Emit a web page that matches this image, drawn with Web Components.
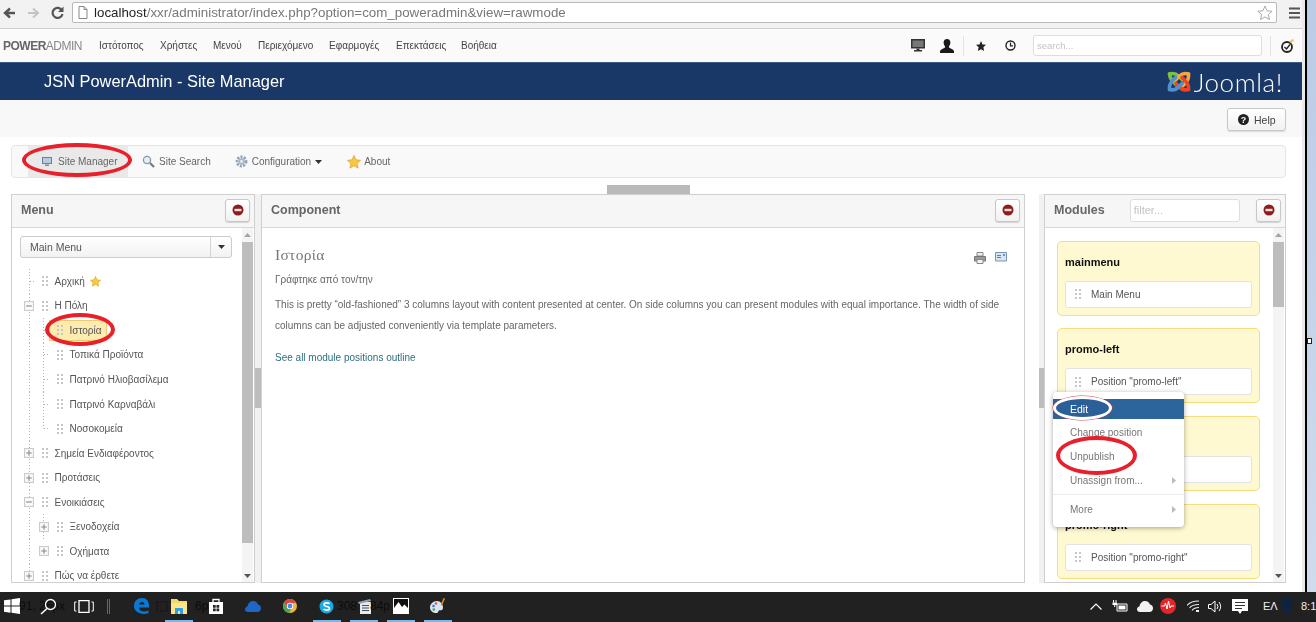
<!DOCTYPE html>
<html>
<head>
<meta charset="utf-8">
<title>JSN PowerAdmin</title>
<style>
    html, body { margin: 0; height: 100%; overflow: hidden; background: #fff; }
    body { font-family: "Liberation Sans", Arial, sans-serif; }
</style>
</head>
<body>
<pa-app>
    <pa-browser-bar>localhost</pa-browser-bar>
    <pa-top-nav></pa-top-nav>
    <pa-title-bar>JSN PowerAdmin - Site Manager</pa-title-bar>
    <pa-help-row></pa-help-row>
    <pa-tab-bar></pa-tab-bar>
    <pa-handle></pa-handle>
    <pa-columns>
        <pa-panel style="width:244px" heading="Menu" thumb-height="301">
            <pa-menu-select>Main Menu</pa-menu-select>
            <pa-tree>
                <pa-tree-row guides="29" star>Αρχική</pa-tree-row>
                <pa-tree-row guides="29" toggle="minus">Η Πόλη</pa-tree-row>
                <pa-tree-row guides="29,43" depth="1" selected>Ιστορία</pa-tree-row>
                <pa-tree-row guides="29,43" depth="1">Τοπικά Προϊόντα</pa-tree-row>
                <pa-tree-row guides="29,43" depth="1">Πατρινό Ηλιοβασίλεμα</pa-tree-row>
                <pa-tree-row guides="29,43" depth="1">Πατρινό Καρναβάλι</pa-tree-row>
                <pa-tree-row guides="29" depth="1" last>Νοσοκομεία</pa-tree-row>
                <pa-tree-row guides="29" toggle="plus">Σημεία Ενδιαφέροντος</pa-tree-row>
                <pa-tree-row guides="29" toggle="plus">Προτάσεις</pa-tree-row>
                <pa-tree-row guides="29" toggle="minus">Ενοικιάσεις</pa-tree-row>
                <pa-tree-row guides="29,43" depth="1" toggle="plus">Ξενοδοχεία</pa-tree-row>
                <pa-tree-row guides="29" depth="1" toggle="plus">Οχήματα</pa-tree-row>
                <pa-tree-row guides="29" toggle="plus">Πώς να έρθετε</pa-tree-row>
            </pa-tree>
        </pa-panel>
        <pa-splitter></pa-splitter>
        <pa-panel style="width:764px" heading="Component" no-scroll>
            <pa-article></pa-article>
        </pa-panel>
        <pa-splitter wide></pa-splitter>
        <pa-panel style="width:242px" heading="Modules" filter thumb-height="65">
            <pa-position name="mainmenu">Main Menu</pa-position>
            <pa-position name="promo-left">Position "promo-left"</pa-position>
            <pa-position name="&#160;"></pa-position>
            <pa-position name="promo-right">Position "promo-right"</pa-position>
        </pa-panel>
    </pa-columns>

    <pa-context-menu></pa-context-menu>
    <pa-ring style="left:22px;top:143px;width:110px;height:34px"></pa-ring>
    <pa-ring style="left:45px;top:313px;width:70px;height:33px"></pa-ring>
    <pa-ring style="left:1056px;top:436px;width:81px;height:39px"></pa-ring>
</pa-app>

<script>
    // all the little drawings live here so rows and bars can share them
    const ICONS = {
        back: '<svg width="13" height="12" viewBox="0 0 13 12"><path d="M12 6H3M7 1.500 2 6l5 4.500" fill="none" stroke="#555" stroke-width="2.400"/></svg>',
        forward: '<svg width="13" height="12" viewBox="0 0 13 12"><path d="M1 6h9M6 1.500 11 6l-5 4.500" fill="none" stroke="#c4c4c4" stroke-width="2"/></svg>',
        reload: '<svg width="13" height="13" viewBox="0 0 13 13"><path d="M11 4.500A5 5 0 1 0 11.500 8" fill="none" stroke="#555" stroke-width="2.200"/><path d="M12.500 .5v5.500H7z" fill="#555"/></svg>',
        page: '<svg width="10" height="13" viewBox="0 0 10 13"><path d="M1 .5h5l3 3v9H1z" fill="#fff" stroke="#888"/><path d="M6 .5v3h3" fill="none" stroke="#888"/></svg>',
        starOutline: '<svg width="16" height="16" viewBox="0 0 16 16"><path d="M8 1l2.100 4.800 5 .5-3.800 3.300 1.200 5L8 11.900l-4.500 2.700 1.200-5L.9 6.300l5-.5z" fill="#fff" stroke="#aaa"/></svg>',
        burger: '<svg width="11" height="12" viewBox="0 0 11 12"><path d="M0 1.500h11M0 6h11M0 10.500h11" stroke="#555" stroke-width="2.200"/></svg>',
        monitor: '<svg width="14" height="13" viewBox="0 0 14 13"><path d="M0 0h14v9.500H0z" fill="#333"/><path d="M1.500 1.500h11v6.500h-11z" fill="#777"/><path d="M5.500 9.500h3V11H11v1.500H3V11h2.500z" fill="#333"/></svg>',
        person: '<svg width="14" height="14" viewBox="0 0 14 14"><path d="M7 0c2.200 0 3.400 1.600 3.400 3.600 0 1.500-.6 2.800-1.400 3.600v1.300l4 2.300c.6.400 1 1 1 1.700V14H0v-1.500c0-.7.400-1.300 1-1.700l4-2.300V7.200C4.200 6.400 3.600 5.100 3.600 3.600 3.600 1.600 4.800 0 7 0z" fill="#1a1a1a"/></svg>',
        starSolid: '<svg width="10" height="10" viewBox="0 0 16 16"><path d="M8 0l2.400 5.400 5.600.6-4.200 3.800L13 16l-5-3-5 3 1.200-6.200L0 6l5.600-.6z" fill="#222"/></svg>',
        clock: '<svg width="11" height="11" viewBox="0 0 11 11"><circle cx="5.500" cy="5.500" r="4.500" fill="none" stroke="#222" stroke-width="1.400"/><path d="M5.500 2.500v3.300h2.500" fill="none" stroke="#222" stroke-width="1.200"/></svg>',
        compass: '<svg width="13" height="14" viewBox="0 0 13 14"><circle cx="6" cy="8" r="5" fill="none" stroke="#222" stroke-width="1.800"/><path d="M3.500 8l2 2L9 5.500" fill="none" stroke="#222" stroke-width="1.400"/><path d="M10 1l1 1-1.500 2-1-1z" fill="#e9b44c"/><circle cx="11.500" cy="1.500" r="1.300" fill="#f0c659"/></svg>',
        tabMonitor: '<svg width="10" height="10" viewBox="0 0 10 10"><path d="M0 0h10v7H0z" fill="#6d7f9a"/><path d="M1 1h8v5H1z" fill="#b9cbe2"/><path d="M3 7.500h4V9H3z" fill="#8a8a8a"/></svg>',
        tabSearch: '<svg width="13" height="13" viewBox="0 0 13 13"><circle cx="5" cy="5" r="3.600" fill="#e7eef5" stroke="#8d98a3" stroke-width="1.300"/><path d="M8 8l4 4" stroke="#777" stroke-width="2.200"/></svg>',
        tabGear: '<svg width="13" height="13" viewBox="0 0 13 13"><circle cx="6.500" cy="6.500" r="4.400" fill="none" stroke="#8fa2b5" stroke-width="3" stroke-dasharray="2 1.200"/><circle cx="6.500" cy="6.500" r="3.200" fill="#a9b8c6"/><circle cx="6.500" cy="6.500" r="1.400" fill="#e7edf2"/></svg>',
        tabStar: '<svg width="14" height="14" viewBox="0 0 16 16"><path d="M8 .5l2.300 5 5.200.6-3.900 3.600 1.100 5.300L8 12.300 3.300 15l1.100-5.300L.5 6.100l5.200-.6z" fill="#f7c843" stroke="#dca22c" stroke-width=".8"/></svg>',
        treeStar: '<svg width="11" height="11" viewBox="0 0 16 16"><path d="M8 .5l2.300 5 5.200.6-3.900 3.600 1.100 5.300L8 12.300 3.300 15l1.100-5.300L.5 6.100l5.200-.6z" fill="#f7c843" stroke="#dca22c" stroke-width=".8"/></svg>',
        grip: '<svg width="6" height="10" viewBox="0 0 6 10"><path d="M0 0h2v2H0zM4 0h2v2H4zM0 4h2v2H0zM4 4h2v2H4zM0 8h2v2H0zM4 8h2v2H4z" fill="#c6c6c6"/></svg>',
        print: '<svg width="12" height="12" viewBox="0 0 12 12"><path d="M3 .5h6V4H3z" fill="#eee" stroke="#888"/><path d="M.5 4.500h11v4.500H.5z" fill="#999" stroke="#777"/><path d="M3 7.500h6v4H3z" fill="#f4f4f4" stroke="#888"/></svg>',
        mail: '<svg width="12" height="10" viewBox="0 0 12 10"><path d="M.5.500h11v8.500H.5z" fill="#d7e4f2" stroke="#7a95b3"/><path d="M2 3h4v1H2zM2 5h4v1H2z" fill="#5e7fa3"/><path d="M8 2h2v2H8z" fill="#6b93c2"/></svg>',
        joomla: '<svg width="26" height="25" viewBox="0 0 26 25"><g fill="none" stroke-width="3.600" stroke-linecap="round"><path d="M3.500 5Q4 10 8 13.500L12.500 18" stroke="#7ac143"/><path d="M3.500 5Q9 3.500 12.500 7L16 10.500" stroke="#7ac143"/><path d="M22.500 5Q17 3.500 13.500 7L9 11.500" stroke="#f9a541"/><path d="M22.500 5Q23 11 19 14.500L16.500 17" stroke="#f9a541"/><path d="M22.500 20.500Q17 22 13.500 18L10 14.500" stroke="#f44321"/><path d="M22.500 20.500Q23 15 18.500 11L16 8.500" stroke="#f44321"/><path d="M3.500 20.500Q9 22 12.500 18L16.500 14" stroke="#5091cd"/><path d="M3.500 20.500Q3 15 7 11L9.500 8.500" stroke="#5091cd"/></g></svg>',
        stop: '<svg width="12" height="12" viewBox="0 0 12 12"><circle cx="6" cy="6" r="5.500" fill="#8e1c1c"/><path d="M2.500 4.800h7v2.400h-7z" fill="#f1dede"/></svg>',
        caretDown: '<svg width="7" height="4" viewBox="0 0 7 4"><path d="M0 0h7L3.500 4z" fill="#333"/></svg>',
        arrowUp: '<svg width="7" height="4" viewBox="0 0 7 4"><path d="M0 4h7L3.500 0z" fill="#a5a5a5"/></svg>',
        arrowDown: '<svg width="7" height="4" viewBox="0 0 7 4"><path d="M0 0h7L3.500 4z" fill="#555"/></svg>',
        arrowRight: '<svg width="4" height="7" viewBox="0 0 4 7"><path d="M0 0v7l4-3.500z" fill="#bbb"/></svg>',
        win: '<svg width="16" height="16" viewBox="0 0 16 16"><path d="M0 2.300 6.500 1.400v6.200H0zM7.500 1.200 16 0v7.600H7.500zM0 8.600h6.500v6.100L0 13.800zM7.500 8.600H16V16l-8.500-1.200z" fill="#fff"/></svg>',
        search: '<svg width="17" height="17" viewBox="0 0 17 17"><circle cx="10.500" cy="6.500" r="5" fill="none" stroke="#fff" stroke-width="1.300"/><path d="M7 10.500 1 16" stroke="#fff" stroke-width="1.600"/></svg>',
        taskView: '<svg width="20" height="13" viewBox="0 0 20 13"><path d="M5 .7h10v11.600H5z" fill="none" stroke="#fff" stroke-width="1.300"/><path d="M2.500 2H.7v9h1.800M17.500 2h1.800v9h-1.800" fill="none" stroke="#fff"/></svg>',
        sep: '<svg width="3" height="15" viewBox="0 0 3 15"><path d="M.5 0v15M2.500 0v15" stroke="#666"/></svg>',
        edge: '<svg width="15" height="16" viewBox="0 0 15 16"><path d="M15 9.500H5c0 3.500 4.500 5.500 9.500 3v2.500C8 17.500 0 14.500 0 8 0 3 3.500 0 8 0c4.500 0 7 3.500 7 7.500zM5 6.500h5.500C10.500 3 5.500 3 5 6.500z" fill="#0a78d6"/></svg>',
        cropGhost: '<svg width="12" height="11" viewBox="0 0 12 11"><path d="M1 1h10v9H1z" fill="none" stroke="#111" stroke-dasharray="2 1"/></svg>',
        folder: '<svg width="16" height="15" viewBox="0 0 16 15"><path d="M0 0h6l2 2h8v13H0z" fill="#f6d769"/><path d="M0 4h16v11H0z" fill="#fbe48b"/><path d="M4 9h8v6H4z" fill="#32a0e0"/><path d="M7 12h2v3H7z" fill="#fbe48b"/></svg>',
        store: '<svg width="14" height="16" viewBox="0 0 14 16"><path d="M0 4h14v12H0z" fill="#fff"/><path d="M4 4V1.500h6V4" fill="none" stroke="#fff" stroke-width="1.300"/><path d="M4 7h2.700v2.700H4zM7.500 7h2.700v2.700H7.500zM4 10.500h2.700v2.700H4zM7.500 10.500h2.700v2.700H7.500z" fill="#222"/></svg>',
        onedrive: '<svg width="16" height="11" viewBox="0 0 16 11"><path d="M3 11C1 11 0 9.500 0 8.200c0-1.500 1-2.700 2.500-2.800C3 2 5.500 0 8 0c2.300 0 4 1.200 5 3.400 2 .3 3 2 3 3.800 0 2-1.400 3.800-3.600 3.800z" fill="#2067c5"/></svg>',
        chrome: '<svg width="14" height="14" viewBox="0 0 14 14"><circle cx="7" cy="7" r="7" fill="#e9b93a"/><path d="M7 0a7 7 0 0 0-6 3.500L4 8.500 7 4h6A7 7 0 0 0 7 0z" fill="#d9483b"/><path d="M1 3.500A7 7 0 0 0 6 14l3-5-5-.5z" fill="#4aa45a"/><circle cx="7" cy="7" r="3.200" fill="#fff"/><circle cx="7" cy="7" r="2.400" fill="#4a8af0"/></svg>',
        skype: '<svg width="15" height="15" viewBox="0 0 15 15"><circle cx="7.500" cy="7.500" r="7" fill="#19a9e6"/><path d="M10.500 4.800C9 3.300 5 3.600 5 5.700c0 2.300 5.500 1.300 5.500 3.700 0 2-4 2.200-6 .7" fill="none" stroke="#fff" stroke-width="1.600"/></svg>',
        doc: '<svg width="14" height="15" viewBox="0 0 14 15"><path d="M2 3h11v12H2z" fill="#e6e9ee"/><path d="M0 3 12 0l1 2L1 5z" fill="#8ea0b3"/><path d="M4 6h7v1H4zM4 8.500h7v1H4zM4 11h7v1H4z" fill="#47515c"/></svg>',
        photo: '<svg width="16" height="16" viewBox="0 0 16 16"><path d="M0 0h16v16H0z" fill="#fff"/><path d="M1 1h14v9L11.500 6.500 9 9 5.500 4 1 10z" fill="#111"/></svg>',
        paint: '<svg width="16" height="16" viewBox="0 0 16 16"><path d="M7 3C3 3 0 6 0 9.500S3 15 6.500 15c2 0 1.500-2 2.500-2.500 1.500-.5 4 .5 4-3C13 6 10.500 3 7 3z" fill="#d8e4ef"/><circle cx="3.500" cy="8" r="1.300" fill="#3a7bd5"/><circle cx="6" cy="5.500" r="1.300" fill="#e2574c"/><circle cx="3.800" cy="11.500" r="1.300" fill="#47a447"/><path d="M13.500 0l1.500.5-3 7-1.300-.5z" fill="#e58a2e"/></svg>',
        chevron: '<svg width="12" height="7" viewBox="0 0 12 7"><path d="M.5 6.500 6 1l5.500 5.500" fill="none" stroke="#fff" stroke-width="1.200"/></svg>',
        battery: '<svg width="16" height="12" viewBox="0 0 16 12"><path d="M1.500 0v2.500M4 0v2.500M2.700 5v2" stroke="#fff" fill="none"/><path d="M.5 2.500h4.500v2.500H.5z" fill="#fff"/><path d="M5 4h10v7H5z" fill="#222" stroke="#fff"/><path d="M6.500 5.500h7v4h-7z" fill="#fff"/></svg>',
        cloud: '<svg width="16" height="11" viewBox="0 0 16 11"><path d="M3 11C1 11 0 9.500 0 8.200c0-1.500 1-2.700 2.500-2.800C3 2 5.500 0 8 0c2.300 0 4 1.200 5 3.400 2 .3 3 2 3 3.800 0 2-1.400 3.800-3.600 3.800z" fill="#f2f2f2"/></svg>',
        pulse: '<svg width="16" height="16" viewBox="0 0 16 16"><circle cx="8" cy="8" r="8" fill="#e2262a"/><path d="M1.500 8h3l1-3 1.500 6 1.500-8 1.500 7 1-2h3" fill="none" stroke="#fff" stroke-width="1"/></svg>',
        wifi: '<svg width="12" height="12" viewBox="0 0 12 12"><path d="M0 5.500C2 3 5 1 12 1M2.500 8C4 6 7 4.500 12 4.500M5 10.500c1-1.500 3-3 7-3" fill="none" stroke="#eee" stroke-width="1.100"/><path d="M9 10h3v2H9z" fill="#eee"/></svg>',
        speaker: '<svg width="15" height="13" viewBox="0 0 15 13"><path d="M.5 4.500h2.500L7 1v11L3 8.500H.5z" fill="none" stroke="#fff"/><path d="M9 4a4 4 0 0 1 0 5M11 2a7 7 0 0 1 0 9" fill="none" stroke="#fff"/></svg>',
        note: '<svg width="16" height="15" viewBox="0 0 16 15"><path d="M0 0h16v12h-6l-2 3-2-3H0z" fill="#fff"/><path d="M3 3h10v1H3zM3 6h10v1H3zM3 9h7v1H3z" fill="#333"/></svg>',
        shield: '<svg width="10" height="16" viewBox="0 0 10 16"><path d="M0 0h10v12l-5 4-5-4z" fill="#0f2340"/></svg>'
    };

    class PaElement extends HTMLElement {
        connectedCallback() {
            if (this.shadowRoot) return;
            const shadowRoot = this.attachShadow({mode: 'open'});
            shadowRoot.innerHTML = this.template;
        }
    }

    class PaApp extends PaElement {
        get template() {
            return `
                <style>
                    :host { display: block; position: relative; width: 1316px; height: 622px; overflow: hidden; }
                    #wrap { display: flex; height: 592px; }
                    #page { width: 1302px; background: #fff; filter: blur(.4px); }
                    #strip { width: 3px; background: #e9e9e9; }
                    #edge { width: 2px; background: #000; }
                    #desk { flex: 1; background: linear-gradient(#bccbe6, #cfdcee); padding-top: 338px; }
                    #grab { display: block; width: 3px; height: 4px; background: #fff; border: 1px solid #222; }
                </style>
                <div id="wrap">
                    <div id="page"><slot></slot></div>
                    <div id="strip"></div>
                    <div id="edge"></div>
                    <div id="desk"><span id="grab"></span></div>
                </div>
                <pa-taskbar></pa-taskbar>
            `;
        }
    }

    class PaBrowserBar extends PaElement {
        get template() {
            return `
                <style>
                    :host { display: flex; align-items: center; height: 29px; box-sizing: border-box; padding: 0 0 3px 3px; background: #f2f2f2; border-bottom: 1px solid #cfcfcf; }
                    svg { display: block; }
                    .nav { display: flex; gap: 11px; align-items: center; width: 69px; }
                    #url { display: flex; align-items: center; gap: 6px; width: 1205px; height: 21px; flex: none; box-sizing: border-box; padding-left: 5px; background: #fff; border: 1px solid #b9b9b9; border-radius: 2px; font: 13.350px "Liberation Sans", sans-serif; color: #777; white-space: nowrap; }
                    #url b { font-weight: normal; color: #222; }
                    #star { margin-left: auto; margin-right: 3px; }
                    #burger { margin-left: 12px; }
                </style>
                <div class="nav">${ICONS.back}${ICONS.forward}${ICONS.reload}</div>
                <div id="url">${ICONS.page}<span><b><slot></slot></b>/xxr/administrator/index.php?option=com_poweradmin&amp;view=rawmode</span><span id="star">${ICONS.starOutline}</span></div>
                <span id="burger">${ICONS.burger}</span>
            `;
        }
    }

    class PaTopNav extends PaElement {
        get template() {
            const items = [['Ιστότοπος', 99], ['Χρήστες', 160], ['Μενού', 213], ['Περιεχόμενο', 258], ['Εφαρμογές', 329], ['Επεκτάσεις', 396], ['Βοήθεια', 461]];
            return `
                <style>
                    :host { display: flex; align-items: center; height: 33px; box-sizing: border-box; padding-left: 3px; background: #fafafa; font: 10px "Liberation Sans", sans-serif; color: #444; }
                    #logo { width: 96px; flex: none; font-size: 12px; letter-spacing: -.5px; color: #666; font-weight: bold; white-space: nowrap; }
                    #logo span { font-weight: normal; color: #888; }
                    ul { display: flex; flex: none; margin: 0; padding: 0; list-style: none; width: 812px; }
                    li { width: var(--w); flex: none; white-space: nowrap; }
                    svg { display: block; }
                    .i { display: block; flex: none; }
                    #person { margin-left: 15px; }
                    #sep1 { width: 1px; height: 20px; background: #e3e3e3; margin-left: 9px; }
                    #star { margin-left: 12px; }
                    #clock { margin-left: 19px; }
                    input { width: 229px; height: 21px; flex: none; box-sizing: border-box; margin: 0 0 0 17px; padding: 0 3px; border: 1px solid #ddd; border-radius: 3px; background: #fff; font: 9.500px "Liberation Sans", sans-serif; }
                    input::placeholder { color: #c4c4c4; }
                    #sep2 { width: 1px; height: 20px; background: #e3e3e3; margin-left: 8px; }
                    #compass { margin-left: 10px; }
                </style>
                <span id="logo">POWER<span>ADMIN</span></span>
                <ul>${items.map((it, n) => `<li style="--w:${n < items.length - 1 ? items[n + 1][1] - it[1] : 450}px">${it[0]}</li>`).join('')}</ul>
                <span class="i" id="monitor">${ICONS.monitor}</span>
                <span class="i" id="person">${ICONS.person}</span>
                <span id="sep1"></span>
                <span class="i" id="star">${ICONS.starSolid}</span>
                <span class="i" id="clock">${ICONS.clock}</span>
                <input placeholder="search...">
                <span id="sep2"></span>
                <span class="i" id="compass">${ICONS.compass}</span>
            `;
        }
    }

    class PaTitleBar extends PaElement {
        get template() {
            return `
                <style>
                    :host { display: flex; align-items: center; height: 38px; box-sizing: border-box; padding: 0 19px 0 44px; background: #1a3867; border-top: 1px solid #3d5a86; color: #fff; }
                    h1 { margin: 0; font: normal 16.400px "Liberation Sans", sans-serif; }
                    #brand { display: flex; align-items: center; gap: 2px; margin-left: auto; font: 300 26px Lato, sans-serif; letter-spacing: .6px; }
                    svg { display: block; }
                </style>
                <h1><slot></slot></h1>
                <div id="brand">${ICONS.joomla}<span>Joomla!</span></div>
            `;
        }
    }

    class PaHelpRow extends PaElement {
        get template() {
            return `
                <style>
                    :host { display: flex; justify-content: flex-end; height: 37px; box-sizing: border-box; padding: 8px 16px 0 0; background: #f8f8f8; }
                    button { display: flex; align-items: center; gap: 5px; width: 59px; height: 23px; padding: 0 0 0 10px; box-sizing: border-box; background: linear-gradient(#fff, #f1f1f1); border: 1px solid #c8c8c8; border-radius: 3px; box-shadow: 0 1px 1px rgba(0,0,0,.12); font: 10.500px "Liberation Sans", sans-serif; color: #444; }
                    i { display: flex; align-items: center; justify-content: center; width: 11px; height: 11px; border-radius: 50%; background: #222; color: #fff; font: bold 9px "Liberation Sans", sans-serif; }
                </style>
                <button><i>?</i>Help</button>
            `;
        }
    }

    class PaTabBar extends PaElement {
        get template() {
            return `
                <style>
                    :host { display: flex; align-items: stretch; width: 1275px; height: 33px; margin: 8px 0 0 11px; box-sizing: border-box; padding-left: 16px; background: #f9f9f9; border: 1px solid #e5e5e5; border-radius: 4px; font: 10px "Liberation Sans", sans-serif; color: #666; }
                    a { display: flex; align-items: center; gap: 4px; white-space: nowrap; }
                    a.on { width: 100px; box-sizing: border-box; padding-left: 14px; background: #e9e9e9; gap: 6px; }
                    svg { display: block; }
                </style>
                <a class="on">${ICONS.tabMonitor}Site Manager</a>
                <a style="margin-left:14px">${ICONS.tabSearch}Site Search</a>
                <a style="margin-left:24px">${ICONS.tabGear}Configuration ${ICONS.caretDown}</a>
                <a style="margin-left:25px;gap:3px">${ICONS.tabStar}About</a>
            `;
        }
    }

    class PaHandle extends PaElement {
        get template() {
            return `
                <style>
                    :host { display: block; height: 16px; box-sizing: border-box; padding-top: 7px; }
                    div { width: 83px; height: 9px; margin-left: 607px; background: #b9b9b9; }
                </style>
                <div></div>
            `;
        }
    }

    class PaColumns extends PaElement {
        get template() {
            return `
                <style>
                    :host { display: flex; height: 389px; padding-left: 11px; }
                </style>
                <slot></slot>
            `;
        }
    }

    class PaSplitter extends PaElement {
        get template() {
            const wide = this.hasAttribute('wide');
            return `
                <style>
                    :host { display: block; width: ${wide ? 19 : 6}px; box-sizing: border-box; padding-left: ${wide ? 14 : 0}px; }
                    div { height: 100%; box-sizing: border-box; background: linear-gradient(#f1f1f1 174px, #bdbdbd 174px, #bdbdbd 214px, #f1f1f1 214px); }
                </style>
                <div></div>
            `;
        }
    }

    class PaPanel extends PaElement {
        get template() {
            const filter = this.hasAttribute('filter');
            const scroll = !this.hasAttribute('no-scroll');
            const thumb = this.getAttribute('thumb-height') || 0;
            return `
                <style>
                    :host { display: flex; flex-direction: column; box-sizing: border-box; border: 1px solid #cfcfcf; background: #fff; overflow: hidden; }
                    header { display: flex; align-items: center; height: 33px; flex: none; box-sizing: border-box; padding: 0 4px 2px 9px; background: #f6f6f6; border-bottom: 1px solid #d8d8d8; font: bold 12.500px "Liberation Sans", sans-serif; color: #666; }
                    button { display: flex; align-items: center; justify-content: center; margin-left: auto; width: 25px; height: 23px; padding: 0; background: linear-gradient(#fff, #f1f1f1); border: 1px solid #c8c8c8; border-radius: 3px; box-shadow: 0 1px 1px rgba(0,0,0,.15); }
                    input { width: 110px; height: 23px; box-sizing: border-box; margin-left: 25px; padding: 0 3px; border: 1px solid #ddd; border-radius: 3px; font: 11px "Liberation Sans", sans-serif; }
                    input::placeholder { color: #c4c4c4; }
                    #body { display: flex; flex: 1; min-height: 0; }
                    #content { flex: 1; min-width: 0; overflow: hidden; }
                    #bar { display: flex; flex-direction: column; align-items: center; width: 11px; margin-right: 1px; background: #f4f4f4; }
                    #bar span { display: flex; align-items: center; justify-content: center; width: 100%; height: 14px; flex: none; }
                    #bar i { display: block; width: 100%; background: #bdbdbd; }
                    #bar span:last-child { margin-top: auto; height: 12px; }
                    svg { display: block; }
                </style>
                <header>
                    ${this.getAttribute('heading')}
                    ${filter ? '<input placeholder="filter...">' : ''}
                    <button>${ICONS.stop}</button>
                </header>
                <div id="body">
                    <div id="content"><slot></slot></div>
                    ${scroll ? `<div id="bar"><span>${ICONS.arrowUp}</span><i style="height:${thumb}px"></i><span>${ICONS.arrowDown}</span></div>` : ''}
                </div>
            `;
        }
    }

    class PaMenuSelect extends PaElement {
        get template() {
            return `
                <style>
                    :host { display: flex; align-items: center; width: 212px; height: 22px; margin: 8px 0 0 8px; box-sizing: border-box; background: linear-gradient(#fff, #f2f2f2); border: 1px solid #ccc; border-radius: 3px; font: 10.500px "Liberation Sans", sans-serif; color: #555; }
                    span { flex: 1; padding-left: 9px; }
                    i { display: flex; align-items: center; justify-content: center; width: 20px; height: 100%; border-left: 1px solid #d5d5d5; }
                    svg { display: block; }
                </style>
                <span><slot></slot></span>
                <i>${ICONS.caretDown}</i>
            `;
        }
    }

    class PaTree extends PaElement {
        get template() {
            return `
                <style>
                    :host { display: block; margin-top: 11px; }
                </style>
                <slot></slot>
            `;
        }
    }

    class PaTreeRow extends PaElement {
        get template() {
            const depth = +(this.getAttribute('depth') || 0);
            const toggle = this.getAttribute('toggle');
            const selected = this.hasAttribute('selected');
            const guides = (this.getAttribute('guides') || '').split(',').map(g => +g - 12);
            const dots = 'repeating-linear-gradient(#b5b5b5 0 1px, transparent 1px 3px)';
            const bg = guides.map(g => `${dots} ${g}px 0 / 1px 100% no-repeat`);
            if (this.hasAttribute('last')) bg.push(`${dots} 31px 0 / 1px 50% no-repeat`);
            if (!toggle) {
                const from = depth ? 31 : 17;
                bg.push(`repeating-linear-gradient(90deg, #b5b5b5 0 1px, transparent 1px 3px) ${from + 1}px 50% / 6px 1px no-repeat`);
            }
            const mark = toggle === 'minus' ? '<path d="M2 4.500h5"/>' : '<path d="M2 4.500h5M4.500 2v5"/>';
            return `
                <style>
                    :host { display: flex; align-items: center; height: 24.550px; box-sizing: border-box; padding-left: ${12 + depth * 15}px; background: ${bg.join(',')}; font: 10px "Liberation Sans", sans-serif; color: #555; }
                    #tog { width: 10px; height: 10px; flex: none; }
                    #tog svg { display: block; }
                    #grip { margin-left: ${selected ? 0 : 8}px; flex: none; display: block; }
                    #grip svg { display: block; }
                    #label { margin-left: 6.500px; padding-right: ${selected ? 4 : 0}px; white-space: nowrap; }
                    #wrap { display: flex; align-items: center; ${selected ? 'padding-left:7px;background:#fdebb0;border:1px solid #ecca72;height:21px;box-sizing:border-box;' : ''} }
                    #star { margin-left: 5px; display: block; }
                    #star svg { display: block; }
                </style>
                <span id="tog">${toggle ? `<svg width="10" height="10" viewBox="0 0 9 9"><rect x=".5" y=".5" width="8" height="8" fill="#fafafa" stroke="#ccc"/><g stroke="#888" fill="none">${mark}</g></svg>` : ''}</span>
                <span id="wrap"><span id="grip">${ICONS.grip}</span><span id="label"><slot></slot></span></span>
                ${this.hasAttribute('star') ? `<span id="star">${ICONS.treeStar}</span>` : ''}
            `;
        }
    }

    class PaArticle extends PaElement {
        get template() {
            return `
                <style>
                    :host { display: block; padding: 18px 14px 0 13px; font: 10px "Liberation Sans", sans-serif; color: #666; }
                    h2 { display: flex; margin: 0; font: normal 15.500px "Liberation Serif", serif; color: #777; letter-spacing: .3px; }
                    #tools { display: flex; gap: 9px; margin: 6px 3px 0 auto; }
                    svg { display: block; }
                    #by { margin: 10px 0 0; color: #666; }
                    #text { margin: 10px 0 0; line-height: 20.500px; }
                    a { display: block; margin-top: 16px; color: #2f6f80; }
                </style>
                <h2>Ιστορία<span id="tools">${ICONS.print}${ICONS.mail}</span></h2>
                <p id="by">Γράφτηκε από τον/την</p>
                <p id="text">This is pretty “old-fashioned” 3 columns layout with content presented at center. On side columns you can present modules with equal importance. The width of side columns can be adjusted conveniently via template parameters.</p>
                <a>See all module positions outline</a>
            `;
        }
    }

    class PaPosition extends PaElement {
        get template() {
            const name = this.getAttribute('name');
            return `
                <style>
                    :host { display: block; width: 203px; height: 75px; margin: 12.670px 0 0 12px; box-sizing: border-box; padding: 0 7px; background: #fef9d0; border: 1px solid #f5dc7e; border-radius: 5px; }
                    h3 { margin: 0; padding-top: 13px; height: 39px; box-sizing: border-box; font: bold 11px/14px "Liberation Sans", sans-serif; color: #111; }
                    div { display: flex; align-items: center; height: 27px; box-sizing: border-box; padding-left: 9px; background: #fff; border: 1px solid #e2e2e2; border-radius: 3px; font: 10px "Liberation Sans", sans-serif; color: #555; }
                    span { display: block; margin-right: 10px; }
                    svg { display: block; }
                </style>
                <h3>${name}</h3>
                <div><span>${ICONS.grip}</span><slot></slot></div>
            `;
        }
    }

    class PaContextMenu extends PaElement {
        get template() {
            return `
                <style>
                    :host { position: absolute; left: 1053px; top: 392px; width: 131px; height: 135px; box-sizing: border-box; padding-top: 7px; background: #fff; border-radius: 4px; box-shadow: 0 1px 5px rgba(0,0,0,.35); font: 10px "Liberation Sans", sans-serif; color: #777; }
                    div { display: flex; align-items: center; justify-content: space-between; height: 24px; padding: 0 8px 0 17px; box-sizing: border-box; }
                    #edit { position: relative; height: 20px; margin-bottom: 1px; background: #2b659b; color: #fff; font-size: 10.500px; }
                    #edit span { position: relative; }
                    #oval { position: absolute; left: 0; top: -3px; width: 59px; height: 24px; box-sizing: border-box; background: #2a5f97; border: 3px solid #fff; border-radius: 50%; box-shadow: 0 0 0 .5px #e3454e; }
                    hr { height: 1px; margin: 2px 0; border: 0; background: #ececec; }
                    svg { display: block; }
                </style>
                <div id="edit"><i id="oval"></i><span>Edit</span></div>
                <div>Change position</div>
                <div>Unpublish</div>
                <div>Unassign from... ${ICONS.arrowRight}</div>
                <hr>
                <div>More ${ICONS.arrowRight}</div>
            `;
        }
    }

    class PaRing extends PaElement {
        get template() {
            return `
                <style>
                    :host { position: absolute; box-sizing: border-box; border: 4px solid #e8202b; border-radius: 50%; }
                </style>
            `;
        }
    }

    class PaTaskbar extends PaElement {
        get template() {
            const item = (name, left) => `<span style="margin-left:${left}px">${ICONS[name]}</span>`;
            const ghost = (text, left, width) => `<em style="margin-left:${left}px;width:${width}px">${text}</em>`;
            return `
                <style>
                    :host { display: block; height: 30px; background: #212121; overflow: hidden; }
                    #icons { display: flex; align-items: center; height: 28px; }
                    #icons > span { display: block; flex: none; }
                    svg { display: block; }
                    em { flex: none; font: normal 12px "Liberation Sans", sans-serif; color: #0c0c0c; white-space: nowrap; }
                    b { flex: none; font: normal 11px "Liberation Sans", sans-serif; color: #eee; white-space: nowrap; }
                    #runs { display: flex; height: 2px; }
                    #runs i { display: block; width: 28px; background: #76b9ed; flex: none; }
                </style>
                <div id="icons">
                    ${item('win', 4)}${ghost('91, 26px', -1, 45)}${item('search', -24)}${item('taskView', 17)}${item('sep', 13)}
                    ${item('edge', 24)}${item('cropGhost', 7)}${item('folder', 3)}${ghost('6p', 8, 13)}${item('store', 1)}
                    ${item('onedrive', 22)}${item('chrome', 22)}${item('skype', 22)}${ghost('308', 3, 16)}${item('doc', 5)}
                    ${ghost('84p', -2, 18)}${item('photo', 5)}${item('paint', 21)}
                    ${item('chevron', 644)}${item('battery', 10)}${item('cloud', 9)}${item('pulse', 7)}${item('wifi', 11)}${item('speaker', 9)}${item('note', 9)}
                    <b style="margin-left:15px;width:14px">ΕΛ</b>${item('shield', 5)}<b style="margin-left:9px">8:1</b>
                </div>
                <div id="runs">
                    <i style="margin-left:165px"></i><i style="margin-left:120px"></i><i style="margin-left:9px"></i><i style="margin-left:9px"></i><i style="margin-left:9px"></i>
                </div>
            `;
        }
    }

    customElements.define('pa-app', PaApp);
    customElements.define('pa-browser-bar', PaBrowserBar);
    customElements.define('pa-top-nav', PaTopNav);
    customElements.define('pa-title-bar', PaTitleBar);
    customElements.define('pa-help-row', PaHelpRow);
    customElements.define('pa-tab-bar', PaTabBar);
    customElements.define('pa-handle', PaHandle);
    customElements.define('pa-columns', PaColumns);
    customElements.define('pa-splitter', PaSplitter);
    customElements.define('pa-panel', PaPanel);
    customElements.define('pa-menu-select', PaMenuSelect);
    customElements.define('pa-tree', PaTree);
    customElements.define('pa-tree-row', PaTreeRow);
    customElements.define('pa-article', PaArticle);
    customElements.define('pa-position', PaPosition);
    customElements.define('pa-context-menu', PaContextMenu);
    customElements.define('pa-ring', PaRing);
    customElements.define('pa-taskbar', PaTaskbar);
</script>
</body>
</html>
